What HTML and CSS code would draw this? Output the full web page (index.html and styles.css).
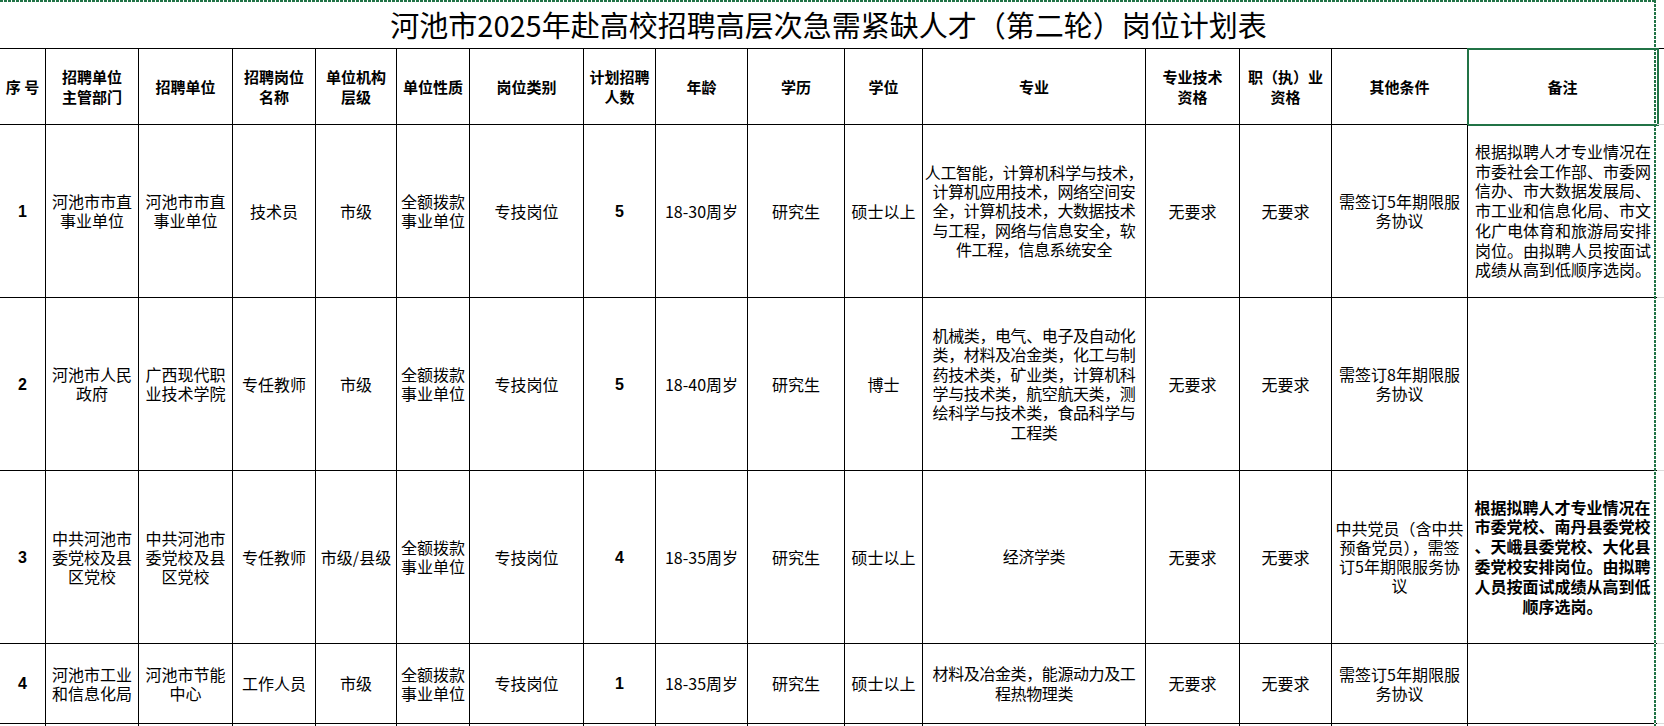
FILE: index.html
```html
<!DOCTYPE html>
<html lang="zh-CN">
<head>
<meta charset="utf-8">
<title>河池市2025年赴高校招聘高层次急需紧缺人才（第二轮）岗位计划表</title>
<link rel="stylesheet" href="styles.css">
</head>
<body>
<div class="sheet">
  <div class="title">河池市2025年赴高校招聘高层次急需紧缺人才（第二轮）岗位计划表</div>
  <div class="grid">
    <!-- header -->
    <div class="c h">序&nbsp;号</div>
    <div class="c h">招聘单位<br>主管部门</div>
    <div class="c h">招聘单位</div>
    <div class="c h">招聘岗位<br>名称</div>
    <div class="c h">单位机构<br>层级</div>
    <div class="c h">单位性质</div>
    <div class="c h">岗位类别</div>
    <div class="c h">计划招聘<br>人数</div>
    <div class="c h">年龄</div>
    <div class="c h">学历</div>
    <div class="c h">学位</div>
    <div class="c h">专业</div>
    <div class="c h">专业技术<br>资格</div>
    <div class="c h">职（执）业<br>资格</div>
    <div class="c h">其他条件</div>
    <div class="c h rm sel">备注</div>
    <div class="c x"></div>

    <!-- row 1 -->
    <div class="c num">1</div>
    <div class="c">河池市市直<br>事业单位</div>
    <div class="c">河池市市直<br>事业单位</div>
    <div class="c">技术员</div>
    <div class="c">市级</div>
    <div class="c">全额拨款<br>事业单位</div>
    <div class="c">专技岗位</div>
    <div class="c num">5</div>
    <div class="c">18-30周岁</div>
    <div class="c">研究生</div>
    <div class="c">硕士以上</div>
    <div class="c major">人工智能，计算机科学与技术，<br>计算机应用技术，网络空间安<br>全，计算机技术，大数据技术<br>与工程，网络与信息安全，软<br>件工程，信息系统安全</div>
    <div class="c">无要求</div>
    <div class="c">无要求</div>
    <div class="c">需签订5年期限服<br>务协议</div>
    <div class="c rm left">根据拟聘人才专业情况在<br>市委社会工作部、市委网<br>信办、市大数据发展局、<br>市工业和信息化局、市文<br>化广电体育和旅游局安排<br>岗位。由拟聘人员按面试<br>成绩从高到低顺序选岗。</div>
    <div class="c x"></div>

    <!-- row 2 -->
    <div class="c num">2</div>
    <div class="c">河池市人民<br>政府</div>
    <div class="c">广西现代职<br>业技术学院</div>
    <div class="c">专任教师</div>
    <div class="c">市级</div>
    <div class="c">全额拨款<br>事业单位</div>
    <div class="c">专技岗位</div>
    <div class="c num">5</div>
    <div class="c">18-40周岁</div>
    <div class="c">研究生</div>
    <div class="c">博士</div>
    <div class="c major">机械类，电气、电子及自动化<br>类，材料及冶金类，化工与制<br>药技术类，矿业类，计算机科<br>学与技术类，航空航天类，测<br>绘科学与技术类，食品科学与<br>工程类</div>
    <div class="c">无要求</div>
    <div class="c">无要求</div>
    <div class="c">需签订8年期限服<br>务协议</div>
    <div class="c rm"></div>
    <div class="c x"></div>

    <!-- row 3 -->
    <div class="c num">3</div>
    <div class="c">中共河池市<br>委党校及县<br>区党校</div>
    <div class="c">中共河池市<br>委党校及县<br>区党校</div>
    <div class="c">专任教师</div>
    <div class="c">市级/县级</div>
    <div class="c">全额拨款<br>事业单位</div>
    <div class="c">专技岗位</div>
    <div class="c num">4</div>
    <div class="c">18-35周岁</div>
    <div class="c">研究生</div>
    <div class="c">硕士以上</div>
    <div class="c major">经济学类</div>
    <div class="c">无要求</div>
    <div class="c">无要求</div>
    <div class="c">中共党员（含中共<br>预备党员），需签<br>订5年期限服务协<br>议</div>
    <div class="c rm strong">根据拟聘人才专业情况在<br>市委党校、南丹县委党校<br>、天峨县委党校、大化县<br>委党校安排岗位。由拟聘<br>人员按面试成绩从高到低<br>顺序选岗。</div>
    <div class="c x"></div>

    <!-- row 4 -->
    <div class="c num">4</div>
    <div class="c">河池市工业<br>和信息化局</div>
    <div class="c">河池市节能<br>中心</div>
    <div class="c">工作人员</div>
    <div class="c">市级</div>
    <div class="c">全额拨款<br>事业单位</div>
    <div class="c">专技岗位</div>
    <div class="c num">1</div>
    <div class="c">18-35周岁</div>
    <div class="c">研究生</div>
    <div class="c">硕士以上</div>
    <div class="c major">材料及冶金类，能源动力及工<br>程热物理类</div>
    <div class="c">无要求</div>
    <div class="c">无要求</div>
    <div class="c">需签订5年期限服<br>务协议</div>
    <div class="c rm"></div>
    <div class="c x"></div>

    <!-- row 5 (partially visible) -->
    <div class="c"></div>
    <div class="c"></div>
    <div class="c"></div>
    <div class="c"></div>
    <div class="c"></div>
    <div class="c"></div>
    <div class="c"></div>
    <div class="c"></div>
    <div class="c"></div>
    <div class="c"></div>
    <div class="c"></div>
    <div class="c"></div>
    <div class="c"></div>
    <div class="c"></div>
    <div class="c"></div>
    <div class="c rm"></div>
    <div class="c x"></div>
  </div>
  <div class="ants-top"></div>
  <div class="ants-right"></div>
</div>
</body>
</html>
```

FILE: styles.css
```css
html, body {
  margin: 0;
  padding: 0;
  background: #ffffff;
  overflow: hidden;
}

body {
  font-family: "Noto Sans CJK SC", "Noto Sans", sans-serif;
  color: #000000;
}

.sheet {
  position: relative;
  width: 1664px;
  height: 726px;
  overflow: hidden;
}

.title {
  width: 1657px;
  height: 48px;
  box-sizing: border-box;
  padding-top: 1px;
  line-height: 47px;
  font-size: 29px;
  text-align: center;
  white-space: nowrap;
}

.grid {
  display: grid;
  grid-template-columns: 46px 93px 94px 83px 81px 73px 114px 72px 92px 97px 78px 223px 94px 92px 136px 189px 7px;
  grid-template-rows: 76px 173px 173px 173px 80px 40px;
  border-top: 1px solid #000000;
  width: 1664px;
}

.c {
  box-sizing: border-box;
  border-right: 1px solid #000000;
  border-bottom: 1px solid #000000;
  display: flex;
  align-items: center;
  justify-content: center;
  text-align: center;
  font-size: 16px;
  line-height: 19px;
  white-space: nowrap;
  position: relative;
}

.h {
  font-size: 15px;
  font-weight: 700;
  line-height: 20px;
}

.num {
  font-family: "Liberation Sans", "Noto Sans CJK SC", sans-serif;
  font-weight: 700;
  font-size: 16px;
}

.major {
  letter-spacing: -0.4px;
  line-height: 19.3px;
}

.rm {
  border-right: none;
}

.left {
  justify-content: flex-start;
  text-align: left;
  padding-left: 7px;
  line-height: 19.8px;
}

.strong {
  font-weight: 700;
  line-height: 19.8px;
}

.x {
  border-right: none;
  border-bottom: 1px solid #dadada;
}

.sel::after {
  content: "";
  position: absolute;
  left: -1px;
  top: -1px;
  width: 192px;
  height: 78px;
  box-sizing: border-box;
  border: 2px solid #217346;
}

.ants-top {
  position: absolute;
  left: 0;
  top: 0;
  width: 1656px;
  height: 2px;
  background: repeating-linear-gradient(90deg, #217346 0 3px, transparent 3px 4px);
}

.ants-right {
  position: absolute;
  left: 1654px;
  top: 0;
  width: 2px;
  height: 726px;
  background: repeating-linear-gradient(180deg, #217346 0 3px, #ffffff 3px 4px);
}
```
